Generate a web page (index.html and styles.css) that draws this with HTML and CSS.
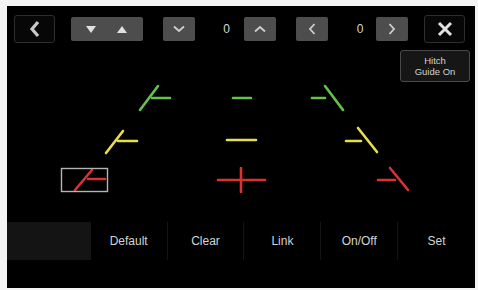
FILE: index.html
```html
<!DOCTYPE html>
<html>
<head>
<meta charset="utf-8">
<link rel="stylesheet" href="styles.css">
</head>
<body>
<div class="screen">
  <div class="topbar">
    <div class="btn dark back">
      <svg width="14" height="18" viewBox="0 0 14 18"><path d="M10 2 L4 9 L10 16" fill="none" stroke="#c8c8c8" stroke-width="3.2" stroke-linejoin="miter"/></svg>
    </div>
    <div class="btn gray updown">
      <svg width="10" height="7" viewBox="0 0 10 7"><path d="M0 0 H10 L5 7 Z" fill="#e0e0e0"/></svg>
      <svg width="10" height="7" viewBox="0 0 10 7"><path d="M0 7 H10 L5 0 Z" fill="#e0e0e0"/></svg>
    </div>
    <div class="btn gray small v1">
      <svg width="12" height="8" viewBox="0 0 12 8"><path d="M1 1.5 L6 6 L11 1.5" fill="none" stroke="#cfcfcf" stroke-width="1.8"/></svg>
    </div>
    <div class="val v0a">0</div>
    <div class="btn gray small">
      <svg width="12" height="8" viewBox="0 0 12 8"><path d="M1 6.5 L6 2 L11 6.5" fill="none" stroke="#cfcfcf" stroke-width="1.8"/></svg>
    </div>
    <div class="btn gray small left">
      <svg width="8" height="12" viewBox="0 0 8 12"><path d="M6.5 1 L2 6 L6.5 11" fill="none" stroke="#cfcfcf" stroke-width="1.8"/></svg>
    </div>
    <div class="val v0b">0</div>
    <div class="btn gray small">
      <svg width="8" height="12" viewBox="0 0 8 12"><path d="M1.5 1 L6 6 L1.5 11" fill="none" stroke="#cfcfcf" stroke-width="1.8"/></svg>
    </div>
    <div class="btn dark close">
      <svg width="16" height="16" viewBox="0 0 16 16"><path d="M2 2 L14 14 M14 2 L2 14" fill="none" stroke="#e2e2e2" stroke-width="3"/></svg>
    </div>
  </div>
  <div class="hitchrow">
    <div class="hitch">Hitch<br>Guide On</div>
  </div>
  <svg class="guides" width="468" height="138" viewBox="7 82 468 138">
    <g stroke-width="2.6" stroke-linecap="round" fill="none">
      <g stroke="#62c24c">
        <path d="M140 110 L158 86"/>
        <path d="M152 98 L170 98"/>
        <path d="M233 98 L251 98"/>
        <path d="M312 98 L325 98"/>
        <path d="M325 86 L343 110"/>
      </g>
      <g stroke="#e6df4a">
        <path d="M106 153 L123 131"/>
        <path d="M118 141 L137 141"/>
        <path d="M227 140 L256 140"/>
        <path d="M346 141 L361 141"/>
        <path d="M358 128 L377 152"/>
      </g>
      <g stroke="#d93232">
        <path d="M75 190 L92 170"/>
        <path d="M88 179 L105 179"/>
        <path d="M218 180 L265 180"/>
        <path d="M241 168 L241 192"/>
        <path d="M378 180 L395 180"/>
        <path d="M390 168 L408 190"/>
      </g>
    </g>
    <rect x="61.5" y="168.5" width="46" height="23" fill="none" stroke="#b4b4b4" stroke-width="1.4"/>
  </svg>
  <div class="bottombar">
    <div class="cell blank"></div>
    <div class="cell">Default</div>
    <div class="cell">Clear</div>
    <div class="cell">Link</div>
    <div class="cell">On/Off</div>
    <div class="cell last">Set</div>
  </div>
</div>
</body>
</html>
```
FILE: styles.css
```css
html, body {
  margin: 0;
  padding: 0;
  background: #f4f4f4;
}
body {
  width: 478px;
  height: 290px;
  overflow: hidden;
}
.screen {
  margin: 6px 0 0 7px;
  width: 468px;
  height: 282px;
  background: #000;
  display: flex;
  flex-direction: column;
  font-family: "Liberation Sans", Arial, sans-serif;
  color: #d0d0d0;
}
.topbar {
  display: flex;
  align-items: center;
  height: 28px;
  margin-top: 9px;
  padding-left: 7px;
}
.btn {
  display: flex;
  align-items: center;
  justify-content: center;
  box-sizing: border-box;
  border-radius: 3px;
}
.btn.dark {
  width: 41px;
  height: 28px;
  background: #070707;
  border: 1.5px solid #2e2e2e;
}
.btn.gray {
  height: 24px;
  background: #4d4d4d;
  border-radius: 2px;
}
.updown {
  width: 72px;
  margin-left: 16px;
  justify-content: space-around;
  padding: 0 6px 0 4px;
}
.small {
  width: 32px;
}
.v1 {
  margin-left: 20px;
}
.left {
  margin-left: 20px;
}
.val {
  font-size: 12px;
  color: #d8d8d8;
  text-align: center;
}
.v0a {
  width: 49px;
  padding-left: 14px;
  box-sizing: border-box;
}
.v0b {
  width: 48px;
  padding-left: 16px;
  box-sizing: border-box;
}
.close {
  margin-left: 16px;
}
.hitchrow {
  display: flex;
  justify-content: flex-end;
  margin-top: 7px;
  padding-right: 5px;
}
.hitch {
  width: 70px;
  height: 32px;
  box-sizing: border-box;
  background: #161616;
  border: 1px solid #4a4a4a;
  border-radius: 3px;
  font-size: 9.5px;
  line-height: 11px;
  text-align: center;
  padding-top: 4px;
  color: #d2d2d2;
}
.guides {
  display: block;
}
.bottombar {
  display: flex;
  margin-top: 2px;
  height: 38px;
}
.cell {
  width: 78px;
  display: flex;
  align-items: center;
  justify-content: center;
  font-size: 12px;
  color: #d4d4d4;
  border-right: 1px solid #141414;
  box-sizing: border-box;
}
.cell.blank {
  background: #141414;
  width: 85px;
  border-right: none;
}
.cell.last {
  border-right: none;
}
```
